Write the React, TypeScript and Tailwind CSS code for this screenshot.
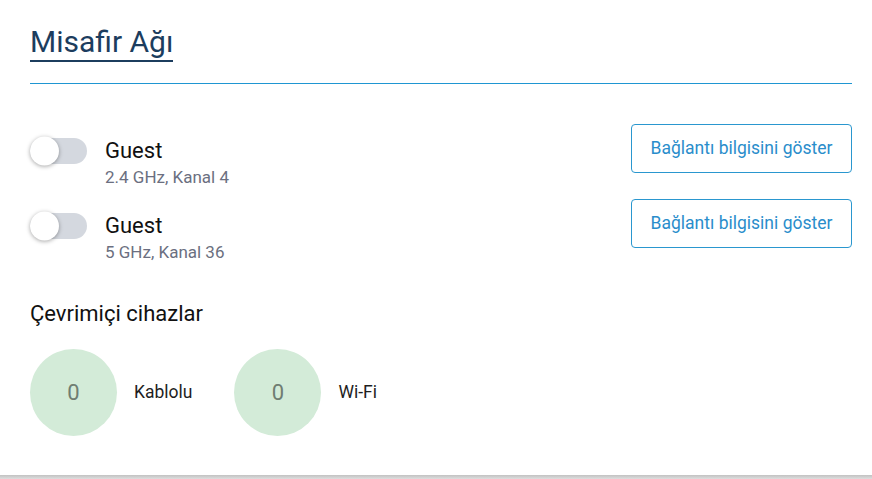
import React, { useState } from 'react';

type Band = { name: string; info: string };

const bands: Band[] = [
  { name: 'Guest', info: '2.4 GHz, Kanal 4' },
  { name: 'Guest', info: '5 GHz, Kanal 36' },
];

const Toggle: React.FC<{ on: boolean; onChange: () => void }> = ({ on, onChange }) => (
  <button
    type="button"
    onClick={onChange}
    className={`relative w-[57px] h-[26px] rounded-full shrink-0 ${on ? 'bg-[#8cc6e6]' : 'bg-[#d4d8df]'}`}
  >
    <span
      className={`absolute top-1/2 -translate-y-1/2 w-[29px] h-[29px] rounded-full bg-white shadow-[0_1px_4px_rgba(0,0,0,0.35)] ${on ? 'left-[28px]' : 'left-0'}`}
    />
  </button>
);

const DeviceCount: React.FC<{ count: number; label: string }> = ({ count, label }) => (
  <div className="flex items-center gap-[17px]">
    <div className="w-[87px] h-[87px] rounded-full bg-[#d3ebd8] flex items-center justify-center text-[22px] text-[#6f7d72]">
      {count}
    </div>
    <span className="text-[17.5px] text-[#1e1e1e]">{label}</span>
  </div>
);

const App: React.FC = () => {
  const [enabled, setEnabled] = useState<boolean[]>([false, false]);

  return (
    <div className="h-[479px] flex flex-col bg-white font-['Roboto',sans-serif]">
      <div className="flex-1 pl-[30px] pr-[20px] pt-[26px]">
        <div className="flex">
          <h1 className="text-[30px] leading-[32px] font-normal text-[#1c3d5e] pb-[2px] border-b-2 border-[#1c3d5e]">
            Misafir Ağı
          </h1>
        </div>
        <div className="mt-[21px] h-px bg-[#1f96d2]" />

        <div className="mt-[40px] flex flex-col gap-[10px]">
          {bands.map((b, i) => (
            <div key={i} className="flex items-start justify-between">
              <div className="flex items-start gap-[18px] pt-[14px]">
                <Toggle
                  on={enabled[i]}
                  onChange={() => setEnabled(enabled.map((v, j) => (j === i ? !v : v)))}
                />
                <div className="-mt-[1px]">
                  <div className="text-[22px] leading-[28px] text-[#111]">{b.name}</div>
                  <div className="text-[17px] leading-[24px] text-[#6b6f80]">{b.info}</div>
                </div>
              </div>
              <button
                type="button"
                className="w-[221px] h-[49px] border border-[#2a97cf] rounded-[4px] text-[17.5px] text-[#2a8dcb] bg-white"
              >
                Bağlantı bilgisini göster
              </button>
            </div>
          ))}
        </div>

        <h2 className="mt-[36px] text-[22px] leading-[28px] font-normal text-[#111]">Çevrimiçi cihazlar</h2>
        <div className="mt-[21px] flex items-center gap-[42px]">
          <DeviceCount count={0} label="Kablolu" />
          <DeviceCount count={0} label="Wi-Fi" />
        </div>
      </div>
      <div className="h-[4px] bg-gradient-to-b from-[#c2c2c2] to-[#dedede]" />
    </div>
  );
};

export default App;
